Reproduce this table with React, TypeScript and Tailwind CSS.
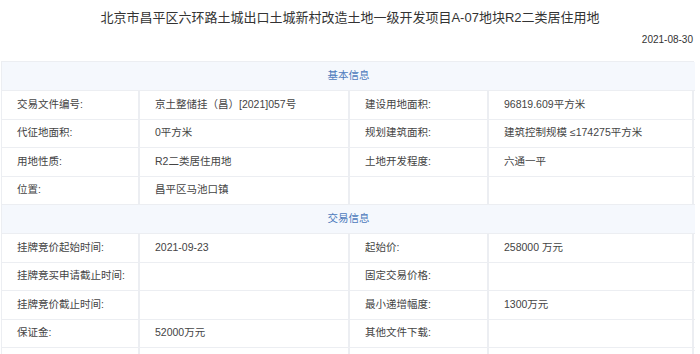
import type { ReactNode } from 'react';

type Row = [string, string, string, string];

const basicRows: Row[] = [
  ['交易文件编号:', '京土整储挂（昌）[2021]057号', '建设用地面积:', '96819.609平方米'],
  ['代征地面积:', '0平方米', '规划建筑面积:', '建筑控制规模 ≤174275平方米'],
  ['用地性质:', 'R2二类居住用地', '土地开发程度:', '六通一平'],
  ['位置:', '昌平区马池口镇', '', ''],
];

const tradeRows: Row[] = [
  ['挂牌竞价起始时间:', '2021-09-23', '起始价:', '258000 万元'],
  ['挂牌竞买申请截止时间:', '', '固定交易价格:', ''],
  ['挂牌竞价截止时间:', '', '最小递增幅度:', '1300万元'],
  ['保证金:', '52000万元', '其他文件下载:', ''],
  ['', '', '', ''],
];

function Cell({ children, last }: { children?: ReactNode; last?: boolean }) {
  return (
    <div
      className={`flex h-[28.5px] items-center border-b border-[#eceef2] pl-[15px] text-[#444] ${
        last ? '' : 'border-r-2'
      }`}
    >
      {children}
    </div>
  );
}

function SectionHeader({ title }: { title: string }) {
  return (
    <div className="col-span-4 flex h-[29px] items-center justify-center border-b border-[#eceef2] bg-[#f5f8fd] text-[#4d7abc]">
      {title}
    </div>
  );
}

function Rows({ rows }: { rows: Row[] }) {
  return (
    <>
      {rows.map((r, i) => (
        <div key={i} className="contents">
          <Cell>{r[0]}</Cell>
          <Cell>{r[1]}</Cell>
          <Cell>{r[2]}</Cell>
          <Cell last>{r[3]}</Cell>
        </div>
      ))}
    </>
  );
}

export default function App() {
  return (
    <div
      className="h-[354px] w-[700px] overflow-hidden bg-white text-[#333]"
      style={{ fontFamily: '"Liberation Sans", "Noto Sans CJK SC", sans-serif' }}
    >
      <h1 className="pt-[9px] text-center text-[13px] leading-[18px] font-normal text-[#333]">
        北京市昌平区六环路土城出口土城新村改造土地一级开发项目A-07地块R2二类居住用地
      </h1>
      <div className="mt-[6px] pr-[7px] text-right text-[10px] leading-[14px]">2021-08-30</div>

      {/* detail table */}
      <div className="mt-[14px] ml-px grid w-[693px] grid-cols-[138px_210px_139px_206px] border-t border-r-2 border-l border-[#eceef2] text-[10.5px]">
        <SectionHeader title="基本信息" />
        <Rows rows={basicRows} />
        <SectionHeader title="交易信息" />
        <Rows rows={tradeRows} />
      </div>
    </div>
  );
}
